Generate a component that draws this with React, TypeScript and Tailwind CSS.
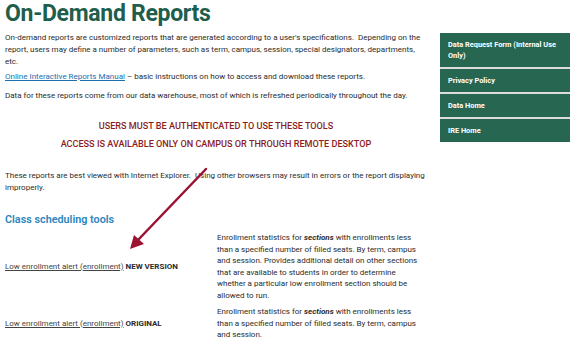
import React from 'react';

const links = ['Data Request Form (Internal Use Only)', 'Privacy Policy', 'Data Home', 'IRE Home'];

const Arrow: React.FC = () => (
    <svg className="absolute left-0 top-0 pointer-events-none" width="577" height="340" viewBox="0 0 577 340">
        <line x1="206" y1="169" x2="138" y2="240" stroke="#9b1233" strokeWidth="2.5" strokeLinecap="round" />
        <polygon points="130,249 134,235 144,244" fill="#9b1233" />
    </svg>
);

export default function App() {
    return (
        <div className="relative w-[577px] h-[340px] overflow-hidden bg-white text-[#2b2b2b] font-['Roboto','Liberation_Sans',sans-serif]">
            <div className="flex gap-[13px] pl-[5px]">
                {/* Main column */}
                <div className="w-[422px] shrink-0">
                    <h1 className="text-[23px] font-bold leading-[28px] tracking-[-0.3px] text-[#1f5e4c]">On-Demand Reports</h1>
                    <p className="text-[8px] leading-[12px] mt-[4px]">
                        On-demand reports are customized reports that are generated according to a user's specifications.&nbsp; Depending on the report, users may define a number of parameters, such as term, campus, session, special designators, departments, etc.
                    </p>
                    <p className="text-[8px] leading-[12px] mt-[3px]">
                        <span className="text-[#1a6fb0] underline">Online Interactive Reports Manual</span> – basic instructions on how to access and download these reports.
                    </p>
                    <p className="text-[8px] leading-[12px] mt-[7px]">
                        Data for these reports come from our data warehouse, most of which is refreshed periodically throughout the day.
                    </p>
                    <div className="mt-[18px] text-center text-[9.1px] leading-[12px] font-medium text-[#8c1d1d]">
                        <p>USERS MUST BE AUTHENTICATED TO USE THESE TOOLS</p>
                        <p className="mt-[6px]">ACCESS IS AVAILABLE ONLY ON CAMPUS OR THROUGH REMOTE DESKTOP</p>
                    </div>
                    <p className="text-[8px] leading-[12px] mt-[20px]">
                        These reports are best viewed with Internet Explorer.&nbsp; Using other browsers may result in errors or the report displaying improperly.
                    </p>
                    <h2 className="text-[10.8px] font-semibold leading-[16px] text-[#2a86c0] mt-[18px]">Class scheduling tools</h2>

                    <div className="grid grid-cols-[212px_208px] gap-y-[5px] text-[8px] leading-[11.5px] mt-[4px]">
                        <div className="flex items-center">
                            <span><span className="underline text-[#444]">Low enrollment alert (enrollment)</span> <span className="font-bold">NEW VERSION</span></span>
                        </div>
                        <p>
                            Enrollment statistics for <b><i>sections</i></b> with enrollments less than a specified number of filled seats. By term, campus and session. Provides additional detail on other sections that are available to students in order to determine whether a particular low enrollment section should be allowed to run.
                        </p>
                        <div className="flex items-center">
                            <span><span className="underline text-[#444]">Low enrollment alert (enrollment)</span> <span className="font-bold">ORIGINAL</span></span>
                        </div>
                        <p>
                            Enrollment statistics for <b><i>sections</i></b> with enrollments less than a specified number of filled seats. By term, campus and session.
                        </p>
                    </div>
                </div>

                {/* Sidebar */}
                <div className="w-[130px] mt-[33px] shrink-0">
                    {links.map((l, i) => (
                        <div
                            key={l}
                            className={`bg-[#276752] text-white font-bold text-[7.4px] leading-[11px] px-[8px] py-[6px] ${i === 0 ? '' : 'border-t-2 border-[#dcdcdc]'}`}
                        >
                            {l}
                        </div>
                    ))}
                </div>
            </div>
            <Arrow />
        </div>
    );
}
